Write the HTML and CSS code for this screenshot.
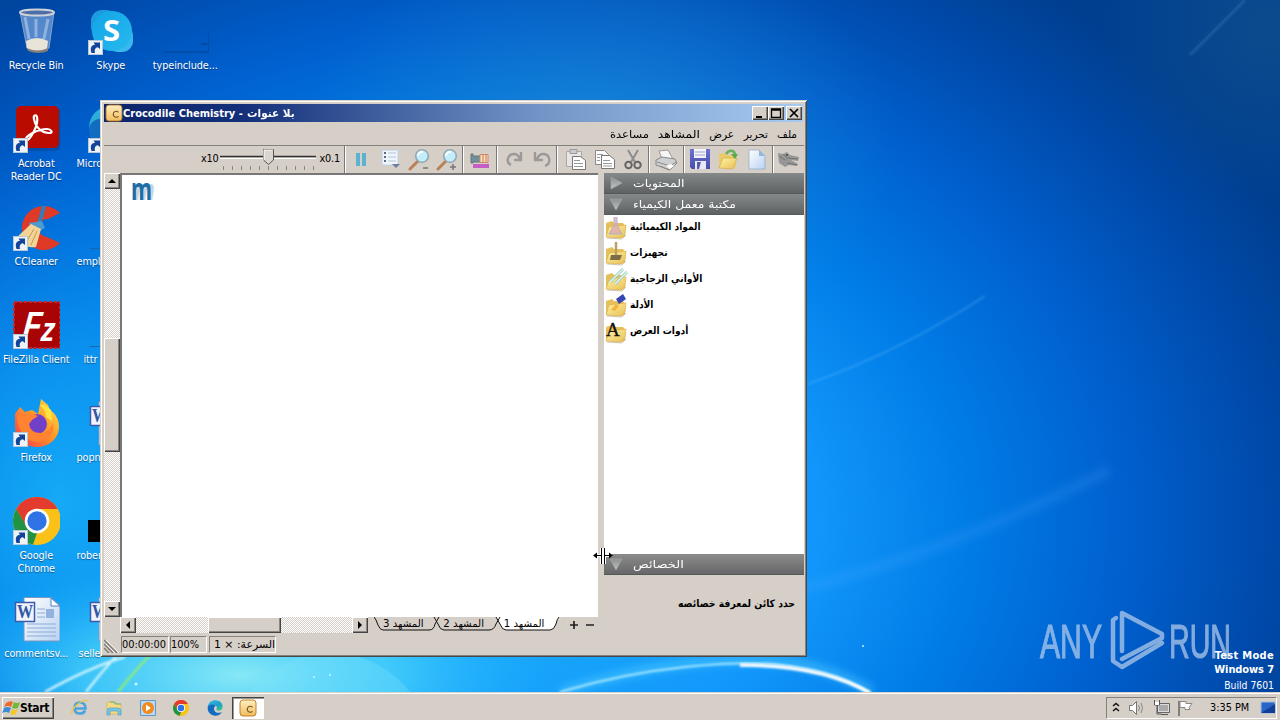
FILE: index.html
```html
<!DOCTYPE html>
<html lang="ar">
<head>
<meta charset="utf-8">
<title>Crocodile Chemistry</title>
<link rel="stylesheet" href="styles.css">
</head>
<body>
<svg class="defs" width="0" height="0">
  <defs>
    <linearGradient id="fold" x1="0" y1="0" x2="1" y2="1"><stop offset="0" stop-color="#fff3a4"/><stop offset="1" stop-color="#e8be55"/></linearGradient>
    <linearGradient id="amber" x1="0" y1="0" x2="0" y2="1"><stop offset="0" stop-color="#fff0c0"/><stop offset="1" stop-color="#f0bc60"/></linearGradient>
    <linearGradient id="edge" x1="0" y1="0" x2="1" y2="1"><stop offset="0" stop-color="#35b8e8"/><stop offset=".6" stop-color="#1fa0c8"/><stop offset="1" stop-color="#49d070"/></linearGradient>
    <linearGradient id="skype" x1="0" y1="0" x2="1" y2="1"><stop offset="0" stop-color="#12a5e6"/><stop offset="1" stop-color="#28b9ee"/></linearGradient>
    <linearGradient id="fox" x1="1" y1="0" x2="0" y2="1"><stop offset="0" stop-color="#ffe950"/><stop offset=".45" stop-color="#ff9a25"/><stop offset="1" stop-color="#f6304d"/></linearGradient>
    <linearGradient id="page" x1="0" y1="0" x2="1" y2="1"><stop offset="0" stop-color="#fff"/><stop offset="1" stop-color="#b8d2f2"/></linearGradient>
    <linearGradient id="disc" x1="0" y1="0" x2="0" y2="1"><stop offset="0" stop-color="#6a72d0"/><stop offset="1" stop-color="#484ea8"/></linearGradient>
    <linearGradient id="tri" x1="0" y1="0" x2="0" y2="1"><stop offset="0" stop-color="#8c8f8f"/><stop offset="1" stop-color="#c2c4c4"/></linearGradient>
    <symbol id="shortcut" viewBox="0 0 15 15"><rect x=".5" y=".5" width="14" height="14" fill="#eef3f8" stroke="#b9c8d8"/><path d="M3.500 13C1.500 7.500 4 5 7 4.800L5.500 2.500H12V9L9.800 7.300C6.500 8 6.500 10.500 7 13z" fill="#12459a"/></symbol>
    <symbol id="folder" viewBox="0 0 24 24"><path d="M2 20V7l6-2 2 2h9l2 3v10l-3 2z" fill="#e5c05a"/><path d="M2 21l3-10 17-2-1 9-4 4z" fill="url(#fold)" stroke="#dfb048" stroke-width=".7"/><path d="M3 22l15 1 4-4" fill="none" stroke="#9a8e70" stroke-opacity=".5"/></symbol>
    <symbol id="word" viewBox="0 0 48 48"><path d="M12 2.500h27l9 8V46H12z" fill="url(#page)" stroke="#7c97bd"/><path d="M39 3v8h9z" fill="#fff" stroke="#5580bd"/><path d="M25 14h8M25 18h8M25 22h8M15 29h29M15 33h29M15 37h29M15 41h29" stroke="#8cacd6"/><rect x="34" y="14" width="8" height="9" fill="#93b2dd"/><rect x="3.500" y="7.500" width="19" height="19" fill="#eff4fc" stroke="#3d5ba8" stroke-width="1.500"/><text x="5" y="23" textLength="16" lengthAdjust="spacingAndGlyphs" class="word-letter">W</text></symbol>
    <symbol id="chrome" viewBox="0 0 48 48"><circle cx="24" cy="24" r="24" fill="#fbc116"/><path d="M3.200 12A24 24 0 0 1 44.800 12H24L13.600 30z" fill="#e33b2e"/><path d="M3.200 12 14 30l10 6-4 11.600A24 24 0 0 1 3.200 12z" fill="#229342"/><circle cx="24" cy="24" r="12.300" fill="#fff"/><circle cx="24" cy="24" r="9.700" fill="#2f73e6"/></symbol>
    <symbol id="croc" viewBox="0 0 18 18"><rect x="1" y="1" width="16" height="16" rx="3" fill="url(#amber)" stroke="#b9761e" stroke-width=".9"/><path d="M13.500 8.300a3 3 0 1 0 0 4" fill="none" stroke="#77501a" stroke-width="1.100"/></symbol>
    <symbol id="edgeIcon" viewBox="0 0 48 48"><path d="M2 24C2 8 14 1 25 1c13 0 22 9 22 19 0 8-6 12-12 12-6 0-8-3-6-7 2-5-2-10-9-10C10 15 4 19 2 24z" fill="url(#edge)"/><path d="M2 24c0 14 11 23 23 23 9 0 16-4 20-11-12 6-24 1-24-10 0-5 3-8 6-9C13 10 3 15 2 24z" fill="#126cc0"/></symbol>
    <symbol id="lens" viewBox="0 0 24 24"><path d="M11 13 3 21" stroke="#b98055" stroke-width="3" stroke-linecap="round"/><circle cx="15" cy="8" r="6.300" fill="#c1eefa" stroke="#91a8b4" stroke-width="1.600"/><path d="M11 8a4 4 0 0 1 5-4" fill="none" stroke="#fff" stroke-width="2"/></symbol>
    <symbol id="sheets" viewBox="0 0 24 24"><path d="M2.500 2.500h9l4 4v10h-13z" fill="#fafafa" stroke="#888"/><path d="M8.500 7.500h8l5 4v9h-13z" fill="#fff" stroke="#777"/><path d="M4 6.500h6M4 9.500h3M4 12.500h3M10 12.500h7M10 15.500h9M10 18h9" stroke="#999"/></symbol>
    <symbol id="sheetpaste" viewBox="0 0 24 24"><path d="M2.500 3.500h15v15h-15z" fill="#e8e6e3" stroke="#aaa"/><path d="M6 1.500h7v4H6z" fill="#ccc" stroke="#999"/><path d="M8.500 8.500h8l5 4v9h-13z" fill="#fff" stroke="#777"/><path d="M10 12.500h6M10 15.500h9M10 18.500h9" stroke="#999"/></symbol>
  </defs>
</svg>
<div class="screen">
  <svg class="wallpaper" viewBox="0 0 1280 692" width="1280" height="692" preserveAspectRatio="none">
    <defs>
      <radialGradient id="sky" gradientUnits="userSpaceOnUse" cx="0" cy="0" r="1" gradientTransform="translate(490 520) scale(880 680)">
        <stop offset="0" stop-color="#20b4f8"/><stop offset=".36" stop-color="#1298fc"/><stop offset=".55" stop-color="#007be6"/><stop offset=".72" stop-color="#0060ce"/><stop offset=".88" stop-color="#004aab"/><stop offset="1" stop-color="#003f90"/>
      </radialGradient>
      <radialGradient id="west" gradientUnits="userSpaceOnUse" cx="0" cy="0" r="1" gradientTransform="translate(60 500) scale(300 360)"><stop offset="0" stop-color="#18b0f8" stop-opacity=".85"/><stop offset=".4" stop-color="#10a0f4" stop-opacity=".6"/><stop offset="1" stop-color="#0878e0" stop-opacity="0"/></radialGradient>
      <radialGradient id="glow" gradientUnits="userSpaceOnUse" cx="0" cy="0" r="1" gradientTransform="translate(240 675) scale(320 120)"><stop offset="0" stop-color="#86e8f6"/><stop offset=".5" stop-color="#45d0fa" stop-opacity=".8"/><stop offset="1" stop-color="#18b0ff" stop-opacity="0"/></radialGradient>
      <radialGradient id="haze" gradientUnits="userSpaceOnUse" cx="0" cy="0" r="1" gradientTransform="translate(600 140) scale(300 200)"><stop offset="0" stop-color="#38a0cc" stop-opacity=".4"/><stop offset="1" stop-color="#38a0cc" stop-opacity="0"/></radialGradient>
      <radialGradient id="corner" gradientUnits="userSpaceOnUse" cx="0" cy="0" r="1" gradientTransform="translate(1270 30) scale(170 170)"><stop offset="0" stop-color="#1a5a88" stop-opacity=".45"/><stop offset="1" stop-color="#1a5a88" stop-opacity="0"/></radialGradient>
      <filter id="s1"><feGaussianBlur stdDeviation="1"/></filter><filter id="s4"><feGaussianBlur stdDeviation="4"/></filter>
    </defs>
    <rect width="1280" height="692" fill="url(#sky)"/><rect width="1280" height="692" fill="url(#west)"/><rect width="1280" height="692" fill="url(#glow)"/><rect width="1280" height="692" fill="url(#haze)"/><rect width="1280" height="692" fill="url(#corner)"/>
    <path d="M250 692C290 640 370 640 410 692z" fill="#7de6fc" fill-opacity=".3"/>
    <path d="M808 384C870 362 930 332 985 296" fill="none" stroke="#7cc6ff" stroke-opacity=".3" filter="url(#s1)" stroke-width="1.500"/>
    <path d="M790 592C900 565 1000 525 1110 470" fill="none" stroke="#58b4ff" stroke-opacity=".18" stroke-width="10" filter="url(#s4)"/>
    <path d="M1190 55 1245 0" fill="none" stroke="#5c9ac8" stroke-opacity=".35" stroke-width="2" filter="url(#s1)"/>
    <path d="M560 692C650 662 740 655 790 662 835 670 858 683 872 692" fill="none" stroke="#60d8ff" stroke-width="8" stroke-opacity=".5" filter="url(#s4)"/>
    <path d="M560 692C650 665 740 660 783 665 830 671 850 681 872 694" fill="none" stroke="#a9e9ff" stroke-width="2" filter="url(#s1)"/>
    <path d="M740 665C810 665 848 680 870 693" fill="none" stroke="#fff" stroke-width="3.500" filter="url(#s1)"/>
    <path d="M45 692Q90 667 125 657M86 692Q100 674 116 656" fill="none" stroke="#c8f3ff" stroke-width="2.500" filter="url(#s1)"/>
    <path d="M118 692Q132 674 150 655" fill="none" stroke="#8bed78" stroke-width="2.500" filter="url(#s1)"/>
    <g fill="#c8f6ff"><circle cx="136" cy="684" r="1.500"/><circle cx="314" cy="677" r="1"/><circle cx="330" cy="675" r="1"/><circle cx="863" cy="646" r="1"/></g>
  </svg>

  <div class="icons">
    <div class="ico"><svg width="48" height="48"><path d="M8 5h34l-5 36q-12 6-22 0z" fill="#a9c8ee" fill-opacity=".5" stroke="#8aa2c4"/><path d="M14 34q11-6 22 0l-1 8q-10 5-20 0z" fill="#e8e4d8"/><path d="M15 41q10 5 21 0v3q-10 4-20 0z" fill="#817d78"/><path d="M13 10l4 22M36 12l-4 20M24 12v18" stroke="#e6f2ff" stroke-opacity=".4" stroke-width="3"/><ellipse cx="25" cy="5.500" rx="17" ry="3" fill="#4c6fa8" stroke="#d0d3d8" stroke-width="2"/></svg><span>Recycle Bin</span></div>
    <div class="ico"><svg width="48" height="48"><rect x="5" y="3" width="44" height="43" rx="6" fill="#003a80" fill-opacity=".4"/><rect x="4" y="1" width="43" height="42" rx="5" fill="#b90b00"/><path d="M13 36C18 36 27 20 25 12c-1-3-4-2-3 2 2 10 9 14 15 14 5 0 2-4-2-4-8 0-22 6-22 12z" fill="none" stroke="#fff" stroke-width="2.200"/><use href="#shortcut" x="1" y="33" width="15" height="15"/></svg><span>Acrobat<br>Reader DC</span></div>
    <div class="ico"><svg width="48" height="48"><path d="M48 10A22 22 0 1 0 48 40L35 34a9 9 0 1 1 1-18z" fill="#df3927"/><path d="M32 3 27 21" stroke="#2e7fbd" stroke-width="4"/><path d="M17 20l13-2 3 7-12 6z" fill="#4b9bcf"/><path d="M19 21 3 36q9 10 21 8l5-18z" fill="#f2d596"/><path d="M22 26l-9 15M25 28l-6 14" stroke="#c59a55"/><use href="#shortcut" x="1" y="33" width="15" height="15"/></svg><span>CCleaner</span></div>
    <div class="ico"><svg width="48" height="48"><rect x="2" y="1" width="46" height="46" fill="#a80406" stroke="#c4282c" stroke-width="2" stroke-dasharray="3 2"/><g transform="translate(10 37) skewX(-6)"><text x="0" y="0" textLength="32" lengthAdjust="spacingAndGlyphs" class="fz">F<tspan dy="3" font-size="34">z</tspan></text></g><use href="#shortcut" x="1" y="33" width="15" height="15"/></svg><span>FileZilla Client</span></div>
    <div class="ico"><svg width="48" height="48"><path d="M3 15 8 8l5 5 7-2 6 4 3-15 7 6 2 5c6 4 9 10 9 17A22 20 0 0 1 3 28z" fill="url(#fox)"/><path d="M28 6c4 4 6 7 6 12l6 4-1-11-6-5z" fill="#ffe43f"/><circle cx="25" cy="25" r="10" fill="#7041c8"/><path d="M5 17c7-4 14-4 21 0l-6 4-3 4q1 9 12 9 9-1 12-10 2 18-15 19Q7 42 5 17z" fill="#ff8330"/><use href="#shortcut" x="1" y="33" width="15" height="15"/></svg><span>Firefox</span></div>
    <div class="ico"><svg width="48" height="48"><use href="#chrome" x="1" y="0" width="48" height="48"/><use href="#shortcut" x="1" y="33" width="15" height="15"/></svg><span>Google<br>Chrome</span></div>
    <div class="ico"><svg width="48" height="48"><use href="#word" width="48" height="48"/></svg><span>commentsv...</span></div>

    <div class="ico"><svg width="48" height="48"><rect x="4" y="3" width="26" height="28" rx="11" fill="#1e9bdd"/><rect x="20" y="18" width="26" height="27" rx="11" fill="#39b8ee"/><circle cx="25" cy="24" r="20" fill="url(#skype)"/><text x="16" y="34" textLength="17" lengthAdjust="spacingAndGlyphs" class="skype-letter">S</text><use href="#shortcut" x="1" y="33" width="15" height="15"/></svg><span>Skype</span></div>
    <div class="ico cut-off"><svg width="48" height="48"><use href="#edgeIcon" width="48" height="48"/><use href="#shortcut" x="1" y="33" width="15" height="15"/></svg><span>Micro</span></div>
    <div class="ico cut-off"><svg width="48" height="48"><path d="M3 45.500h40" stroke="#1768a8"/></svg><span>empl</span></div>
    <div class="ico cut-off deep"><svg width="48" height="48"><path d="M3 45.500h40" stroke="#1768a8"/></svg><span>ittr</span></div>
    <div class="ico cut-off"><svg width="48" height="48"><use href="#word" width="48" height="48"/></svg><span>popn</span></div>
    <div class="ico cut-off"><svg width="48" height="48"><path d="M1 23h40v22H1z"/></svg><span>rober</span></div>
    <div class="ico cut-off"><svg width="48" height="48"><use href="#word" width="48" height="48"/></svg><span class="nudge">selle</span></div>

    <div class="ico"><svg width="48" height="48"><path d="M3 45h45V24M40 37h7" fill="none" stroke="#083c87" stroke-opacity=".8"/></svg><span>typeinclude...</span></div>
  </div>

  <div class="watermark">
    <svg width="212" height="64" viewBox="0 0 212 64"><g fill="#b6cdec" stroke="#b6cdec" stroke-width="1.200" opacity=".72"><text x="1" y="49" textLength="62" lengthAdjust="spacingAndGlyphs" class="wm">ANY</text><text x="130" y="49" textLength="62" lengthAdjust="spacingAndGlyphs" class="wm">RUN</text></g><g fill="none" stroke="#b6cdec" opacity=".72" stroke-width="4.500" stroke-linejoin="round" stroke-linecap="round"><path d="M83 42V4l40 21v4L83 50M123 34 83 58l-9-6V11l3-2"/></g></svg>
  </div>
  <div class="build"><b class="mode">Test Mode</b><b>Windows 7</b><span>Build 7601</span></div>

  <div class="window">
    <div class="titlebar"><svg width="18" height="18"><use href="#croc" width="18" height="18"/></svg><span class="title">Crocodile Chemistry - <span class="title-ar">بلا عنوات</span></span>
      <div class="winbtns">
        <i class="btn3d"><svg width="12" height="10"><path d="M2 8h6v2H2z"/></svg></i><i class="btn3d"><svg width="12" height="10"><path d="M1.500 1h9v8.500h-9zM1 2h10" fill="none" stroke="#000" stroke-width="1.300"/></svg></i><i class="btn3d close"><svg width="12" height="10"><path d="M2 1l8 8M10 1 2 9" stroke="#000" stroke-width="1.700"/></svg></i>
      </div>
    </div>
    <div class="menu" dir="rtl"><span class="n1">ملف</span><span class="n2">تحرير</span><span class="n3">عرض</span><span class="n4">المشاهد</span><span class="n5">مساعدة</span></div>
    <div class="toolbar">
      <div class="tg speed"><span>x10</span>
        <svg width="97" height="27"><path d="M0 10.500h96" stroke="#333" stroke-width="1.500"/><path d="M0 12.500h96" stroke="#fff"/><path d="M3.500 20v4M12.500 20v4M21.500 20v4M30.500 20v4M39.500 20v4M48.500 20v4M57.500 20v4M66.500 20v4M75.500 20v4M84.500 20v4M93.500 20v4" stroke="#888"/><path d="M43.500 3.500h10v10.500l-5 4.500-5-4.500z" fill="#dad6cf" stroke="#555"/><path d="M44 14V4h9" stroke="#fff" fill="none"/></svg>
        <span>x0.1</span></div>
      <div class="tg g1"><svg width="24" height="24"><path d="M6 5h4v13H6zM12 5h4v13h-4z" fill="#5cb2cf"/></svg>
        <svg width="24" height="24"><path d="M4 2h16v15H4z" fill="#eef5fd" stroke="#c0cede"/><path d="M6 4h2v2H6zM6 8h2v2H6zM6 12h2v2H6z" fill="#5a6b80"/><path d="M10 5h8M10 9h8M10 13h8" stroke="#b3c4d4"/><path d="M14 16h8l-4 4z" fill="#6d7f9a"/></svg>
        <svg width="24" height="24"><use href="#lens" width="24" height="24"/><path d="M16 20h5" stroke="#777" stroke-width="1.500"/></svg>
        <svg width="24" height="24"><use href="#lens" width="24" height="24"/><path d="M15 19h6M18 16v6" stroke="#777" stroke-width="1.500"/></svg></div>
      <div class="tg g2"><svg width="24" height="24"><path d="M3 6h2v2h8v6H5v1H3z" fill="#70919b" stroke="#677"/><path d="M12 6.500h8v8h-8z" fill="#f0e6b8" stroke="#c86"/><path d="M15 7v7M18 7v7" stroke="#d66"/><path d="M5 16h16v4H5z" fill="#c65dc5"/></svg></div>
      <div class="tg g3"><svg width="24" height="24"><path d="M8 17C2 14 5 6 11 6q4 0 6 5M18 4v8h-7" fill="none" stroke="#9b9a98" stroke-width="2.400"/></svg><svg width="24" height="24"><path d="M15 18C22 15 20 6 13 6q-4 0-6 5M5 4v8h8" fill="none" stroke="#9b9a98" stroke-width="2.400"/></svg></div>
      <div class="tg g4"><svg width="24" height="24"><use href="#sheetpaste" width="24" height="24"/></svg><svg width="24" height="24"><use href="#sheets" width="24" height="24"/></svg><svg width="24" height="24"><path d="M7 2l7 12M17 2l-7 12" stroke="#8c8c8c" stroke-width="2"/><circle cx="7.500" cy="17" r="3.200" fill="none" stroke="#666" stroke-width="2"/><circle cx="16.500" cy="17" r="3.200" fill="none" stroke="#666" stroke-width="2"/></svg></div>
      <div class="tg g5"><svg width="24" height="24"><path d="M5 3l9-1 5 9H8z" fill="#f6f6f6" stroke="#999"/><path d="M2 12l6-3 13 2 2 4-7 7-14-5z" fill="#cfd0d2" stroke="#888"/><path d="M3 14l13 4 6-4M6 18l9 4" fill="none" stroke="#888"/><path d="M12 18l5-2 3 2-4 3z" fill="#fff"/></svg></div>
      <div class="tg g6"><svg width="24" height="24"><path d="M2 1h20v20H4l-2-2z" fill="url(#disc)"/><path d="M6 1h12v9H6z" fill="#f4f5fc"/><path d="M7 4h10M7 7h10" stroke="#a0a4c8"/><path d="M7 13h11v8H7z" fill="#e7eaf4"/><path d="M9 14h4l-2 7H9z" fill="#555cae"/></svg><svg width="24" height="24"><path d="M2 20V6l6-1 2 2h9v12z" fill="#e9cc6a"/><path d="M2 20l4-10h14l-4 11z" fill="url(#fold)" stroke="#d8aa45" stroke-width=".7"/><path d="M9 6c3-5 9-4 9 1" fill="none" stroke="#6bb05a" stroke-width="2.500"/><path d="M14 6h7l-3 5z" fill="#5ba64e"/></svg><svg width="24" height="24"><path d="M4 2h10l6 6v13H4z" fill="url(#page)" stroke="#8aa6c6" stroke-width=".7"/><path d="M14 2v6h6z" fill="#8db8dc"/></svg></div>
      <div class="tg g7"><svg width="24" height="24"><path d="M1 5l5 1 4-2 3 3 9 2-1 4-7-1 7 4-1 2-8-1-4 2-6-4z" fill="#979797"/><path d="M2 8l6 4M6 6l5 5M11 10l10 1M10 15l10 2" stroke="#737373"/><circle cx="10" cy="7" r="1" fill="#444"/></svg></div>
    </div>
    <div class="main">
      <div class="left">
        <div class="work">
          <div class="vbar checker"><i class="btn3d"><b class="up"></b></i><i class="btn3d vthumb"></i><i class="btn3d vdown"><b class="down"></b></i></div>
          <div class="canvas"><svg width="60" height="40"><text x="12" y="25" textLength="21" lengthAdjust="spacingAndGlyphs" class="m-shadow">m</text><text x="9" y="25" textLength="21" lengthAdjust="spacingAndGlyphs" class="m">m</text></svg></div>
        </div>
        <div class="bottom">
          <div class="hbar checker"><i class="btn3d"><b class="lt"></b></i><i class="btn3d hthumb"></i><i class="btn3d hright"><b class="rt"></b></i></div>
          <div class="tabs">
            <svg class="tabshape" width="192" height="16"><path d="M122 0l4 7q2 6 6 6h44q4 0 6-6 1-5 5-7z" fill="#fff"/><path d="M0 0q2 2 4 8 2 5 5 5h46q5 0 6-6l4-7M60 0l4 7q2 6 6 6h45q5 0 7-6l4-7M122 0l4 7q2 6 6 6h44q4 0 6-6 1-5 3-7" fill="none" stroke="#111"/></svg>
            <span class="t3" dir="rtl">المشهد 3</span><span class="t2" dir="rtl">المشهد 2</span><span class="t1" dir="rtl">المشهد 1</span>
          </div>
          <svg class="plusminus" width="30" height="16"><path d="M6 8h8M10 4v8M22 8h8" stroke="#222" stroke-width="1.700"/></svg>
        </div>
        <div class="status"><svg width="16" height="17"><path d="M0 4l13 13M0 8l9 9M0 12l5 5" stroke="#807c76" stroke-width="1.500"/><path d="M2 4l13 13M2 8l9 9" stroke="#fff" stroke-width=".8"/></svg><span class="s1">00:00:00</span><span class="s2">100%</span><span class="s3" dir="rtl">السرعة: × 1</span></div>
      </div>
      <div class="panel">
        <div class="phead"><svg width="14" height="14"><path d="M2 1l11 6-11 6z" fill="url(#tri)" stroke="#a9abab" stroke-width=".6"/></svg><span>المحتويات</span></div>
        <div class="phead"><svg width="14" height="14"><path d="M1 2h12L7 13z" fill="url(#tri)" stroke="#a9abab" stroke-width=".6"/></svg><span>مكتبة معمل الكيمياء</span></div>
        <div class="plist">
          <div><svg width="24" height="24"><use href="#folder" width="24" height="24"/><path d="M10 1v8l-5 9h13l-5-9V1" fill="#e2a4b4" fill-opacity=".75" stroke="#aab4cb"/></svg><span>المواد الكيميائية</span></div>
          <div><svg width="24" height="24"><use href="#folder" width="24" height="24"/><path d="M12 0v13" stroke="#b8a068" stroke-width="2.500"/><path d="M7 13h11l-2 5H6z" fill="#7c6d48"/></svg><span>تجهيزات</span></div>
          <div><svg width="24" height="24"><use href="#folder" width="24" height="24"/><path d="M6 14 19 1M11 16 23 4" stroke="#9ccdbd" stroke-width="3"/><path d="M6 14 19 1M11 16 23 4" stroke="#e2f7f1" stroke-width="1.200"/></svg><span>الأواني الزجاجية</span></div>
          <div><svg width="24" height="24"><use href="#folder" width="24" height="24"/><path d="M12 5l7-5 3 5-7 5z" fill="#3546b4"/><path d="M7 16l5-6 3 2-4 5z" fill="#f0b33c"/></svg><span>الأدلة</span></div>
          <div><svg width="24" height="24"><use href="#folder" width="24" height="24"/><text x="2" y="16" class="a-letter">A</text></svg><span>أدوات العرض</span></div>
        </div>
        <div class="phead gray"><svg width="14" height="14"><path d="M1 2h12L7 13z" fill="url(#tri)" stroke="#a9abab" stroke-width=".6"/></svg><span class="hp">الخصائص</span></div>
        <div class="props" dir="rtl"><span>حدد كائن لمعرفة خصائصه</span></div>
      </div>
    </div>
  </div>
  <svg class="cursor" width="22" height="18"><path d="M9.500 1v16M12.500 1v16M2 8.500h6M14 8.500h6" fill="none" stroke="#fff" stroke-width="3"/><path d="M9.500 1v16M12.500 1v16M2 8.500h7M13 8.500h7" stroke="#000"/><path d="M5 5.500v6L1 8.500zM17 5.500v6l4-3z"/></svg>

  <div class="taskbar">
    <div class="start"><svg width="18" height="18"><path d="M4 4q4-3 7-1L9 8Q6 6 2 8z" fill="#ed6a2a"/><path d="M12 3q3 2 6 0l-2 6q-3 1-6 0z" fill="#72b839"/><path d="M2 9q3-2 7 0l-2 5q-3-2-7 0z" fill="#3d8bd5"/><path d="M10 10q3 2 6 0l-2 5q-3 2-6 0z" fill="#f8c42d"/></svg><span>Start</span></div>
    <div class="quick">
      <svg width="18" height="18"><path d="M3.500 9.500h11q0-6-5.500-6t-5.500 6q0 5 5.500 5 4 0 5-3" fill="none" stroke="#4aa5df" stroke-width="2.600"/><path d="M1 15C-1 10 12-1 17 2" fill="none" stroke="#edc54f" stroke-width="1.500"/></svg>
      <svg width="18" height="18"><path d="M2 3h6l1 2h7v10H2z" fill="#f4db82" stroke="#d5b557" stroke-width=".7"/><path d="M5 3h5l1 2h5" stroke="#6cb67a" fill="none"/><path d="M2 16v-4q0-3 3-3h8q3 0 3 3v4h-3v-4H5v4z" fill="#76c6e9" stroke="#4798c1" stroke-width=".6"/></svg>
      <svg width="18" height="18"><path d="M1.500 1.500h15v15h-15z" fill="#b9daf2" stroke="#5f9acb"/><circle cx="9" cy="9" r="6" fill="#f48818"/><path d="M7 5.500 12 9l-5 3.500z" fill="#fff"/></svg>
      <svg width="18" height="18"><use href="#chrome" x="1" y="1" width="16" height="16"/></svg>
      <svg width="18" height="18"><use href="#edgeIcon" x="1" y="1" width="16" height="16"/></svg>
    </div>
    <div class="task"><svg width="18" height="18"><use href="#croc" width="18" height="18"/></svg></div>
    <div class="tray">
      <svg width="8" height="12"><path d="M1 4l3-2.500L7 4M1 9l3-2.500L7 9" fill="none" stroke="#111" stroke-width="1.500"/></svg>
      <svg class="snd" width="18" height="16"><path d="M1.500 5.500h3l4-4v13l-4-4h-3z" fill="#fff" stroke="#777"/><path d="M10.500 5q2 3 0 6M13 3q3 5 0 10" fill="none" stroke="#888"/></svg>
      <svg class="net" width="18" height="18"><path d="M4.500 4.500h12v9h-12z" fill="#ddd" stroke="#666"/><path d="M6 6h9v6H6z" fill="#aaa"/><path d="M1.500 1v5h5V1M4 6v9h4M8 15.500h7" fill="none" stroke="#555"/><path d="M2 3h4v3H2z" fill="#fff"/></svg>
      <svg class="flag" width="17" height="16"><path d="M2 1v15" stroke="#666" stroke-width="1.500"/><path d="M3 1.500h6v2h6l-3 4 1 2H8v-2H3z" fill="#fff" stroke="#888"/></svg>
      <span>3:35 PM</span>
      <svg class="show" width="16" height="14"><path d="M1 1h14v11H1z" fill="#2865c7" stroke="#9fb9db"/><path d="M1 12 15 3v9z" fill="#123f96"/></svg>
    </div>
  </div>
</div>
</body>
</html>
```
FILE: styles.css
```css
* { box-sizing: border-box; }
body { margin: 0; overflow: hidden; font-family: "DejaVu Sans Condensed", "DejaVu Sans", "Liberation Sans", sans-serif; font-stretch: condensed; font-size: 11px; color: #000; }
svg { display: block; flex: none; }
i, b { font-style: normal; }
.defs { position: absolute; }
.screen { position: relative; width: 1280px; height: 720px; display: flex; flex-direction: column; overflow: hidden; background: #0a7ce0; }
.wallpaper { position: absolute; left: 0; top: 0; }

.icons { position: relative; height: 692px; width: 224px; margin-left: -1px; padding-top: 7px; display: grid; grid-template-rows: repeat(7, 98px); grid-template-columns: repeat(3, 74.5px); grid-auto-flow: column; color: #fff; line-height: 13px; text-shadow: 0 1px 1px rgba(0,20,60,.5); }
.ico { display: flex; flex-direction: column; align-items: center; gap: 4px; text-align: center; font-size: 10.8px; letter-spacing: -.1px; white-space: nowrap; }
.ico svg { text-shadow: none; }
.cut-off { align-items: flex-start; }
.cut-off svg { margin-left: 13px; }
.cut-off span { width: 27px; padding-left: 3px; overflow: hidden; text-align: left; }
.deep span { padding-left: 10px; }
.cut-off .nudge { padding-left: 5px; }
.word-letter { font: bold 18px "Liberation Serif", serif; fill: #3456a4; }
.fz { font: italic bold 38px "Liberation Sans", sans-serif; fill: #fff; }
.skype-letter { font: bold 29px "Noto Sans", sans-serif; fill: #fff; }
.a-letter { font: 19px "Liberation Serif", serif; fill: #111; stroke: #111; stroke-width: .3px; }

.watermark { position: absolute; left: 1039px; top: 609px; }
.wm { font: 49px "Liberation Sans", sans-serif; }
.build { position: absolute; right: 6px; top: 649px; display: flex; flex-direction: column; align-items: flex-end; color: #fff; font-size: 11px; line-height: 14px; }
.build b { letter-spacing: -.1px; }
.build .mode { letter-spacing: .3px; }
.build span { margin-top: 1px; font-size: 10.3px; }

.window { position: absolute; left: 100px; top: 100px; width: 707px; height: 557px; padding: 4px 3px 3px 4px; background: #d6cfc8; box-shadow: inset 1px 1px #d6cfc8, inset -1px -1px #484848, inset 2px 2px #fff, inset -2px -2px #85817c; display: flex; flex-direction: column; }
.titlebar { height: 18px; width: 699px; display: flex; align-items: center; padding: 0 1px; background: linear-gradient(90deg, #0b246b, #14307a 20%, #7194c6 62%, #a6caf0); color: #fff; font-weight: bold; }
.title { font-size: 11px; white-space: nowrap; flex: 1; }
.title-ar { display: inline-block; transform: scaleX(1.06); transform-origin: left; margin-left: 1px; }
.winbtns { display: flex; }
.btn3d { display: flex; width: 16px; height: 16px; align-items: center; justify-content: center; background: #d6cfc8; box-shadow: inset 1px 1px #fff, inset -1px -1px #444, inset -2px -2px #8a8680; }
.winbtns .btn3d { height: 14px; }
.winbtns .close { margin-left: 2px; }
.menu, .phead, .tabs, .s3 { font-family: "DejaVu Sans", "Liberation Sans", sans-serif; font-stretch: normal; }
.menu { height: 24px; display: flex; align-items: center; gap: 9px; padding-right: 7px; font-size: 10.5px; border-bottom: 1px solid #85817c; }
.menu span { white-space: nowrap; transform-origin: right; }
.n1 { width: 20px; }
.n2 { width: 25px; }
.n3 { width: 25px; }
.n4 { width: 42px; transform: scaleX(1.18); }
.n5 { width: 39px; transform: scaleX(1.1); }
.toolbar { height: 27px; width: 700px; display: flex; }
.tg { display: flex; align-items: center; justify-content: space-between; border-left: 1px solid #fff; box-shadow: -1px 0 #777; }
.speed { width: 241px; padding-left: 97px; justify-content: flex-start; gap: 1px; border: 0; box-shadow: none; }
.speed svg { margin: 0 2px 0 0; }
.speed span { font-size: 10.8px; letter-spacing: -.2px; padding-bottom: 2px; }
.g1 { width: 118px; padding: 0 4px; }
.g2 { width: 34px; padding: 0 4px; }
.g3 { width: 60px; padding: 0 3px 0 5px; }
.g4 { width: 92px; padding: 0 4px 0 6px; }
.g5 { width: 35px; padding: 0 4px; }
.g6 { width: 89px; padding: 0 4px 0 3px; }
.g7 { flex: 1; padding-left: 3px; }

.main { height: 480px; display: flex; gap: 6px; }
.left { width: 494px; display: flex; flex-direction: column; }
.work { height: 444px; display: flex; }
.checker { background: repeating-conic-gradient(#fff 0 25%, #d6cfc8 0 50%) 0 0 / 2px 2px; }
.vbar { width: 16px; display: flex; flex-direction: column; }
.vthumb { height: 114px; margin-top: 149px; }
.vdown { margin-top: auto; }
.canvas { flex: 1; background: #fff; border: solid #777; border-width: 2px 0 0 2px; }
.m { font: bold 31px "Noto Sans", sans-serif; fill: #1d6ea8; }
.m-shadow { font: italic bold 28px "Noto Sans", sans-serif; fill: #c9d6e2; }
.up { border: 4px solid transparent; border-top: 0; border-bottom-color: #000; }
.down { border: 4px solid transparent; border-bottom: 0; border-top-color: #000; }
.lt { border: 4px solid transparent; border-left: 0; border-right-color: #000; }
.rt { border: 4px solid transparent; border-right: 0; border-left-color: #000; }
.bottom { height: 16px; display: flex; padding-left: 16px; }
.hbar { width: 248px; display: flex; }
.hthumb { width: 73px; margin-left: 72px; }
.hright { margin-left: auto; }
.tabs { position: relative; width: 190px; margin-left: 6px; display: flex; font-size: 10.2px; line-height: 13px; padding-left: 9px; }
.tabs span { position: relative; width: 61px; white-space: nowrap; direction: rtl; text-align: left; }
.tabshape { position: absolute; left: 0; top: 0; }
.status { height: 20px; display: flex; align-items: flex-end; padding-top: 3px; line-height: 15px; }
.status span { height: 17px; border: 1px solid; border-color: #85817c #fff #fff #85817c; white-space: nowrap; padding-left: 0; font-size: 10.9px; }
.s1 { width: 48px; margin-left: 1px; }
.s2 { width: 37px; margin-left: 1px; }
.s3 { width: 67px; margin-left: 2px; }

.panel { width: 200px; display: flex; flex-direction: column; }
.phead { height: 21px; display: flex; align-items: center; gap: 10px; padding-left: 5px; color: #fff; background: linear-gradient(#85898a, #5e6263); border-bottom: 1px solid #55595a; font-size: 10.5px; }
.phead span { transform: scaleX(1.18); transform-origin: left; white-space: nowrap; }
.phead .hp { transform: scaleX(1.24); }
.gray { background: linear-gradient(#8c8c8c, #676767); }
.plist { height: 339px; background: #fff; }
.plist div { height: 26px; display: flex; align-items: center; gap: 2px; font-weight: bold; font-size: 10.1px; }
.plist span { padding-bottom: 3px; }
.props { padding: 22px 9px 0 0; font-weight: bold; font-size: 10.3px; }
.cursor { position: absolute; left: 592px; top: 547px; }

.taskbar { position: relative; height: 28px; background: #d6cfc8; box-shadow: inset 0 1px #d6cfc8, inset 0 2px #fff; display: flex; align-items: center; padding: 3px 3px 0 2px; }
.start { width: 52px; height: 22px; display: flex; align-items: center; font-weight: bold; font-size: 12px; box-shadow: inset 1px 1px #fff, inset -1px -1px #444, inset -2px -2px #8a8680; letter-spacing: -.3px; }
.quick { display: flex; gap: 15.8px; margin-left: 17px; }
.task { width: 32px; height: 22px; margin-left: 8px; background: #fff; box-shadow: inset 1px 1px #444, inset 2px 2px #999; display: flex; align-items: center; justify-content: center; }
.tray { margin-left: auto; width: 171px; height: 22px; border: 1px solid; border-color: #85817c #fff #fff #85817c; display: flex; align-items: center; padding-left: 5px; }
.snd { margin-left: 8px; }
.net { margin-left: 7px; }
.flag { margin-left: 6px; }
.tray span { margin-left: 16px; white-space: nowrap; font-size: 10.8px; }
.show { margin-left: auto; }
```
